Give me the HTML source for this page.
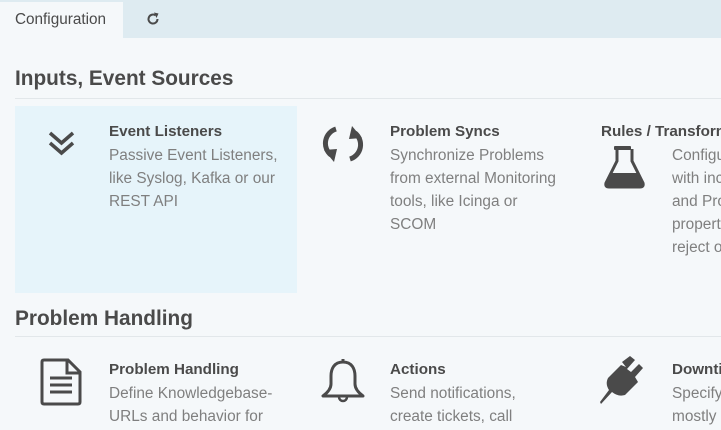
<!DOCTYPE html>
<html style="overflow:hidden"><head><style>
body{margin:0;width:721px;height:430px;overflow:hidden;background:#f5f8fa;font-family:"Liberation Sans",sans-serif;position:relative}
.bar{position:absolute;left:0;top:0;width:721px;height:38px;background:#deebf1}
.tab{position:absolute;left:0;top:2px;width:123px;height:36px;background:#f5f8fa;color:#4a4a4a;font-size:15.3px;line-height:36px;text-indent:15px}
h2{position:absolute;margin:0;left:15px;font-size:20.8px;font-weight:bold;color:#4a4a4a}
.hr{position:absolute;left:15px;width:706px;height:1px;background:#e2e7ea}
.t{position:absolute;font-size:15.2px;font-weight:bold;color:#4a4a4a;white-space:nowrap}
.d{position:absolute;font-size:15.4px;line-height:23px;color:#7f7f7f;white-space:nowrap}
svg{position:absolute}
.clip{position:absolute;left:0;top:0;width:721px;height:430px;overflow:hidden}
</style></head><body><div class="clip">
<div class="bar"></div>
<div class="tab">Configuration</div>
<svg style="left:145px;top:11px" width="16" height="16" viewBox="0 0 16 16"><path d="M12.5 8A4.5 4.5 0 1 1 10.5 4.3" fill="none" stroke="#4a4a4a" stroke-width="2"/><path d="M9 1.5L13.5 2.5 11.5 7Z" fill="#4a4a4a"/></svg>

<h2 style="top:67px">Inputs, Event Sources</h2>
<div class="hr" style="top:98px"></div>
<div style="position:absolute;left:15px;top:106px;width:282px;height:187px;background:#e6f4fa"></div>

<svg style="left:47px;top:130px" width="29" height="27" viewBox="0 0 29 27"><path d="M3 3L14.5 13 26 3M3 13L14.5 23 26 13" fill="none" stroke="#4a4a4a" stroke-width="3.5"/></svg>
<div class="t" style="left:109px;top:123px">Event Listeners</div>
<div class="d" style="left:109px;top:144px">Passive Event Listeners,<br>like Syslog, Kafka or our<br>REST API</div>

<svg style="left:322px;top:124px" width="42" height="40" viewBox="0 0 42 40"><path d="M14 5A15 15 0 0 0 9 31" fill="none" stroke="#4a4a4a" stroke-width="5"/><path d="M2 26L15 25 12 38Z" fill="#4a4a4a"/><path d="M28 35A15 15 0 0 0 33 9" fill="none" stroke="#4a4a4a" stroke-width="5"/><path d="M40 14L27 15 30 2Z" fill="#4a4a4a"/></svg>
<div class="t" style="left:390px;top:123px">Problem Syncs</div>
<div class="d" style="left:390px;top:144px">Synchronize Problems<br>from external Monitoring<br>tools, like Icinga or<br>SCOM</div>

<div class="t" style="left:601px;top:123px">Rules / Transformations</div>
<svg style="left:604px;top:146px" width="41" height="43" viewBox="0 0 41 43"><rect x="10" y="0" width="17" height="4" rx="1" fill="#4a4a4a"/><path d="M13 3V15L2 37Q1 41 5 41H36Q40 41 39 37L28 15V3" fill="none" stroke="#4a4a4a" stroke-width="3"/><path d="M8 27H33L39 38Q40 41 36 41H5Q1 41 2 38Z" fill="#4a4a4a"/></svg>
<div class="d" style="left:672px;top:144px">Configure rules<br>with incoming<br>and Problems<br>properties or<br>reject or</div>

<h2 style="top:307px">Problem Handling</h2>
<div class="hr" style="top:336px"></div>

<svg style="left:40px;top:358px" width="43" height="48" viewBox="0 0 43 48"><path d="M4 2H28L40 14V44Q40 46 38 46H4Q2 46 2 44V4Q2 2 4 2Z" fill="none" stroke="#4a4a4a" stroke-width="3"/><path d="M27 2V15H40" fill="none" stroke="#4a4a4a" stroke-width="3"/><path d="M10 20H32M10 27H32M10 34H32" stroke="#4a4a4a" stroke-width="3"/></svg>
<div class="t" style="left:109px;top:361px">Problem Handling</div>
<div class="d" style="left:109px;top:382px">Define Knowledgebase-<br>URLs and behavior for</div>

<svg style="left:320px;top:356px" width="46" height="50" viewBox="0 0 46 50"><path d="M23 3V6M23 6C14 6 11 13 11 20V28C11 33 7 37 3 40H43C39 37 35 33 35 28V20C35 13 32 6 23 6Z" fill="none" stroke="#4a4a4a" stroke-width="3" stroke-linejoin="round"/><path d="M19 41A4 4 0 0 0 27 41" fill="none" stroke="#4a4a4a" stroke-width="2.5"/></svg>
<div class="t" style="left:390px;top:361px">Actions</div>
<div class="d" style="left:390px;top:382px">Send notifications,<br>create tickets, call</div>

<svg style="left:600px;top:356px" width="44" height="50" viewBox="0 0 44 50"><path d="M30 1L35 5 27 14 31 17 39 9 43 13 35 22 38 27 25 40Q18 42 12 37L1 49 0 47 9 35Q5 29 8 23L21 10 26 12 22 7Z" fill="#4a4a4a" transform="translate(0,-1)"/></svg>
<div class="t" style="left:672px;top:361px">Downtimes</div>
<div class="d" style="left:672px;top:382px">Specify<br>mostly</div>
</div></body></html>
